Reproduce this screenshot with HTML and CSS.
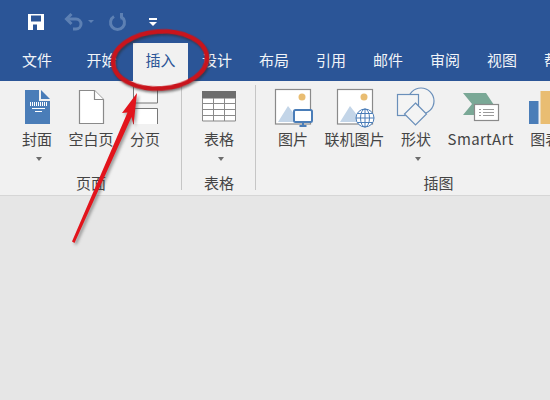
FILE: index.html
```html
<!DOCTYPE html>
<html lang="zh">
<head>
<meta charset="utf-8">
<title>Word</title>
<link rel="stylesheet" href="styles.css">
</head>
<body>
<div class="app">
  <header class="titlebar">
    <div class="qat">
      <svg class="qat-save" viewBox="0 0 20 20"><path fill="#fff" fill-rule="evenodd" d="M2 2h16v16H2zM5 3.500v6h10v-6zM7 12.500V18h4v-5.500z"/></svg>
      <svg class="qat-undo" viewBox="0 0 20 20"><path class="faded" d="M3 7h9a5 5 0 0 1 0 10H9"/><path class="faded" d="M7.500 2 2.500 7l5 5"/></svg>
      <span class="qat-caret"></span>
      <svg class="qat-redo" viewBox="0 0 20 20"><path class="faded" d="M6 4.500a7 7 0 1 0 7 0"/><path class="faded" d="M13.500 1v5h-1"/></svg>
      <span class="qat-more"></span>
    </div>
    <nav class="tabs">
      <span class="tab tab-file">文件</span>
      <span class="tab tab-home">开始</span>
      <span class="tab tab-active">插入</span>
      <span class="tab">设计</span>
      <span class="tab">布局</span>
      <span class="tab">引用</span>
      <span class="tab">邮件</span>
      <span class="tab">审阅</span>
      <span class="tab">视图</span>
      <span class="tab">帮助</span>
    </nav>
  </header>

  <section class="ribbon">
    <div class="group group-pages">
      <div class="items">
        <div class="item">
          <svg class="icon" viewBox="0 0 40 40"><path class="blue" d="M8 3h14v11h11v23H8z"/><path class="blue" d="M24 3l9 9h-9z"/><path class="hatch" d="M13 17h17"/><path class="wline" d="M15 21.500h13M18 24.500h7"/></svg>
          <span class="label">封面</span><span class="caret"></span>
        </div>
        <div class="item">
          <svg class="icon" viewBox="0 0 40 40"><path class="outline" d="M8.500 3.500h15l9 9v24h-24z"/><path class="outline" d="M23.500 3.500v9h9"/></svg>
          <span class="label">空白页</span>
        </div>
        <div class="item">
          <svg class="icon" viewBox="0 0 40 40"><path class="paper-soft" d="M8.500 0v16h24V0"/><path class="paper" d="M8.500 37V21.500h24V37"/></svg>
          <span class="label">分页</span>
        </div>
      </div>
      <div class="group-label">页面</div>
    </div>
    <div class="sep"></div>
    <div class="group group-table">
      <div class="items">
        <div class="item">
          <svg class="icon" viewBox="0 0 40 40"><rect class="white" x="3.500" y="4.500" width="33" height="29"/><rect class="header" x="3" y="4" width="34" height="7.500"/><path class="grid" d="M3.500 11v23h33V11M3.500 16.500h33M3.500 22.500h33M3.500 28.500h33M14.500 11v23M25.500 11v23"/></svg>
          <span class="label">表格</span><span class="caret"></span>
        </div>
      </div>
      <div class="group-label">表格</div>
    </div>
    <div class="sep"></div>
    <div class="group group-illus">
      <div class="items">
        <div class="item">
          <svg class="icon" viewBox="0 0 40 40"><rect class="outline" x="2.500" y="2.500" width="35" height="34.500"/><circle class="sun" cx="29" cy="10" r="3.500"/><path class="hill" d="M5 35l10-16 7 9v7z"/><rect class="screen" x="21" y="23" width="18" height="12" rx="1.500"/><path class="stand" d="M30 35v4M26.500 39h7"/></svg>
          <span class="label">图片</span>
        </div>
        <div class="item">
          <svg class="icon" viewBox="0 0 40 40"><rect class="outline" x="2.500" y="2.500" width="35" height="34.500"/><circle class="sun" cx="29" cy="10" r="3.500"/><path class="hill" d="M5 35l10-16 7 9v7z"/><circle class="screen thin" cx="30" cy="31" r="9"/><path class="stand thin" d="M21 31h18M22.500 26.500h15M22.500 35.500h15M30 22v18"/><ellipse class="stand thin" cx="30" cy="31" rx="4.500" ry="9"/></svg>
          <span class="label">联机图片</span>
        </div>
        <div class="item">
          <svg class="icon" viewBox="0 0 40 40"><circle class="shape" cx="25" cy="14" r="13"/><rect class="shape" x="1.500" y="7.500" width="21" height="21"/><path class="shape" d="M19.500 16l11 11-11 11-11-11z"/></svg>
          <span class="label">形状</span><span class="caret"></span>
        </div>
        <div class="item">
          <svg class="icon" viewBox="0 0 40 40"><path class="teal" d="M2 6h23l10 15-4 7H2l9-11z"/><rect class="outline" x="13.500" y="17.500" width="24" height="16"/><path class="doc-lines" d="M18 22.500h2M22 22.500h11M18 25.500h2M22 25.500h11M18 28.500h2M22 28.500h11"/></svg>
          <span class="label label-latin">SmartArt</span>
        </div>
        <div class="item">
          <svg class="icon" viewBox="0 0 40 40"><rect class="blue" x="4" y="14" width="9.500" height="23"/><rect class="sun" x="15.500" y="4" width="10.500" height="33"/></svg>
          <span class="label">图表</span>
        </div>
      </div>
      <div class="group-label">插图</div>
    </div>
  </section>
</div>

<svg class="markup" viewBox="0 0 550 400">
  <ellipse class="ring" cx="160" cy="60" rx="47" ry="28.500" transform="rotate(-4 160 60)"/>
  <path class="arrow" d="M72 241.500l2.500 1.500 57-126 2 8 3.500-32-15 20 5.500-.5z"/>
</svg>
</body>
</html>
```
FILE: styles.css
```css
* { box-sizing: border-box; }
html, body { margin: 0; height: 100%; }
body {
  position: relative;
  overflow: hidden;
  background: #e6e6e6;
  font-family: "Noto Sans CJK SC", "Noto Sans", sans-serif;
  font-size: 15px;
  color: #444;
}
.app { width: 550px; overflow: hidden; }

.titlebar { background: #2b5597; height: 81px; }
.qat { display: flex; align-items: center; height: 43px; padding-left: 26px; }
.qat svg { width: 20px; height: 20px; flex: none; }
.qat-undo { margin-left: 18px; }
.qat-caret {
  margin-left: 4px;
  border: 3px solid transparent;
  border-top: 3px solid #5d80b3;
  border-bottom: 0;
}
.qat-redo { margin-left: 14px; }
.qat-more {
  margin-left: 21px;
  width: 8px;
  height: 7px;
  border-top: 2px solid #fff;
}
.qat-more::after {
  content: "";
  display: block;
  margin-top: 2px;
  border: 4px solid transparent;
  border-top: 4px solid #fff;
  border-bottom: 0;
}
.faded { fill: none; stroke: #5d80b3; stroke-width: 3; }
.white { fill: #fff; }

.tabs { display: flex; height: 38px; white-space: nowrap; }
.tab {
  flex: none;
  width: 57px;
  line-height: 34px;
  text-align: center;
  color: #f1f4f8;
}
.tab-file { margin-left: 8.500px; }
.tab-home { margin-left: 7.500px; }
.tab-active {
  width: 55px;
  margin: 0 .5px 0 3px;
  background: #f1f1f1;
  color: #2b5597;
}

.ribbon {
  display: flex;
  height: 115px;
  background: #f1f1f1;
  border-bottom: 1px solid #d6d6d6;
}
.group {
  flex: none;
  display: flex;
  flex-direction: column;
  height: 114px;
  padding: 6px 21px 0 22px;
}
.group-illus { width: 364px; }
.items { display: flex; gap: 16.500px; flex: 1; }
.item { display: flex; flex-direction: column; align-items: center; flex: none; }
.icon { width: 40px; height: 40px; margin: 0 -5px; overflow: visible; flex: none; }
.label { margin-top: 2px; line-height: 20px; white-space: nowrap; }
.label-latin { letter-spacing: .35px; }
.caret {
  margin: 8px 0 0 4px;
  border: 3.500px solid transparent;
  border-top: 4px solid #6d6d6d;
  border-bottom: 0;
}
.group-label { height: 22px; line-height: 20px; text-align: center; }
.sep { flex: none; width: 1px; margin: 4px 0 5px; background: #c6c6c6; }

.blue { fill: #4a7db8; }
.hatch { stroke: #fff; stroke-width: 4; stroke-dasharray: 1 1; fill: none; }
.wline { stroke: #fff; stroke-width: 1; fill: none; }
.outline { fill: #fff; stroke: #8a8a8a; stroke-width: 1.200; }
.paper { fill: #fff; stroke: #777; stroke-width: 1; }
.paper-soft { fill: #f8f8f8; stroke: #777; stroke-width: 1; }
.header { fill: #6d6d6d; }
.grid { fill: none; stroke: #8a8a8a; stroke-width: 1; }
.sun { fill: #e9bd72; }
.hill { fill: #c3d5e8; }
.screen { fill: #fff; stroke: #4a7db8; stroke-width: 2; }
.stand { fill: none; stroke: #4a7db8; stroke-width: 2; }
.thin { stroke-width: 1; }
.shape { fill: #f4f4f4; stroke: #6a8fba; stroke-width: 1.200; }
.teal { fill: #7aa896; }
.doc-lines { fill: none; stroke: #9a9a9a; stroke-width: 1; }

.markup {
  position: absolute;
  left: 0;
  top: 0;
  width: 550px;
  height: 400px;
  pointer-events: none;
}
.ring {
  fill: none;
  stroke: #c9141c;
  stroke-width: 4.500;
  filter: drop-shadow(1px 2px 1px rgba(40, 40, 40, .55));
}
.arrow {
  fill: #e2141c;
  filter: drop-shadow(2px 2px 1.500px rgba(70, 70, 70, .5));
}
```
